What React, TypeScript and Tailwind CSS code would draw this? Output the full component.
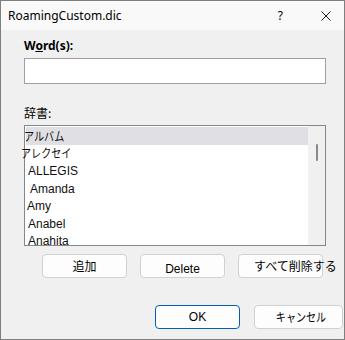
import React from 'react';

const items: { text: string; jp?: boolean; shift: string }[] = [
  { text: 'アルバム', jp: true, shift: 'ml-[-2px]' },
  { text: 'アレクセイ', jp: true, shift: 'ml-[-5px]' },
  { text: 'ALLEGIS', shift: 'ml-[2px]' },
  { text: 'Amanda', shift: 'ml-[4px]' },
  { text: 'Amy', shift: 'ml-[1px]' },
  { text: 'Anabel', shift: 'ml-[2px]' },
  { text: 'Anahita', shift: 'ml-[2px]' },
];

const ui = "font-['Noto_Sans','Noto_Sans_CJK_JP',sans-serif]";
const arial = "font-['Liberation_Sans','Noto_Sans_CJK_JP',sans-serif]";
const jp = "font-['Noto_Sans_CJK_JP',sans-serif]";

const Button: React.FC<{ className?: string; children: React.ReactNode }> = ({ className = '', children }) => (
  <div
    className={`flex h-[24px] w-[85px] items-center justify-center rounded-[4px] border bg-[#fdfdfd] text-[12px] leading-none text-black ${className}`}
  >
    {children}
  </div>
);

export default function App() {
  return (
    <div className="flex h-[340px] w-[345px] flex-col border border-[#7f7f7f] bg-[#f0f0f0] text-black">
      {/* title bar */}
      <div className="flex h-[29px] items-center bg-[#f9f9f9]">
        <span className={`${ui} ml-[7px] text-[12px]`}>RoamingCustom.dic</span>
        <span className={`${ui} ml-auto text-[12px]`}>?</span>
        <svg className="ml-[38px] mr-[13px]" width="10" height="10" viewBox="0 0 10 10">
          <path d="M0.5 0.5 L9.5 9.5 M9.5 0.5 L0.5 9.5" stroke="#1a1a1a" strokeWidth="1" />
        </svg>
      </div>

      <div className="flex flex-col pl-[23px]">
        <label className={`${ui} mt-[6px] h-[20px] text-[12px] font-bold leading-[20px]`}>
          W<span className="underline">o</span>rd(s):
        </label>
        <div className="mt-[2px] h-[26px] w-[302px] border border-[#a0a0a0] bg-white" />

        <div className={`${jp} mt-[20px] h-[18px] text-[12px] leading-[18px]`}>辞書:</div>

        {/* dictionary list */}
        <div className="mt-[3px] flex h-[121px] w-[302px] border border-[#828790] bg-white">
          <div className="flex flex-1 flex-col pl-px pt-px">
            {items.map((it, i) => (
              <div
                key={it.text}
                className={`flex h-[17.6px] shrink-0 items-center ${i === 0 ? 'bg-[#e0e0e4]' : ''}`}
              >
                <span
                  className={`${it.jp ? `${jp} origin-left scale-x-[0.84]` : arial} ${it.shift} inline-block text-[12px] leading-none text-[#101010]`}
                >
                  {it.text}
                </span>
              </div>
            ))}
          </div>
          <div className="flex w-[17px] justify-center bg-[#f0f0f0] pt-[18px]">
            <div className="h-[17px] w-[2px] rounded-full bg-[#8a8a8a]" />
          </div>
        </div>

        <div className="mt-[8px] flex gap-[13px] pl-[18px]">
          <Button className={`${jp} border-[#d1d1d1]`}>追加</Button>
          <Button className={`${arial} border-[#d1d1d1] pt-[6px]`}>Delete</Button>
          <Button className={`${jp} justify-start overflow-visible whitespace-nowrap border-[#d1d1d1] pl-[15px]`}>
            すべて削除する
          </Button>
        </div>

        <div className="mt-[27px] flex gap-[14px] pl-[131px]">
          <Button className={`${arial} border-[#005fb8]`}>OK</Button>
          <Button className={`${jp} w-[89px] border-[#d1d1d1] pl-[6px]`}>
            <span className="inline-block scale-x-[0.84]">キャンセル</span>
          </Button>
        </div>
      </div>
    </div>
  );
}
